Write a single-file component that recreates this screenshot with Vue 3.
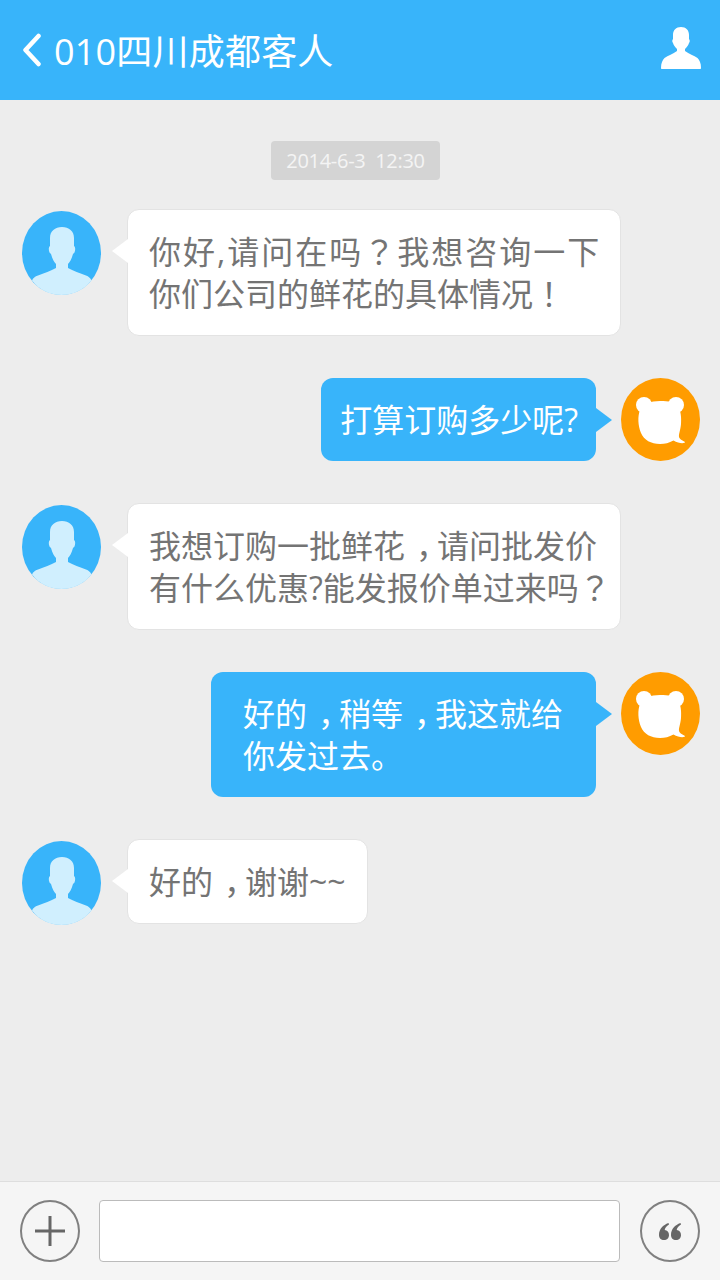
<template>
  <div class="chat-page">
    <!-- Header -->
    <div class="top-bar">
      <svg class="back-icon" width="20" height="34" viewBox="0 0 20 34">
        <path d="M16.5 3 L3.5 17 L16.5 31" fill="none" stroke="#fff" stroke-width="4.5" stroke-linecap="round" stroke-linejoin="round" />
      </svg>
      <span class="top-title">010四川成都客人</span>
      <svg class="user-icon" width="40" height="42" viewBox="0 0 40 42">
        <path fill="#fff" d="M20 0 C15 0 12 3 12 8 L12 12 C11 13 11 15 12 16 C12.5 18 14 20 16 22 L16 24 C12 27 7 28.5 3.5 31 C1.5 33 0 36 0 41 C0 41.6 .4 42 1 42 L39 42 C39.6 42 40 41.6 40 41 C40 36 38.5 33 36.5 31 C33 28.5 28 27 24 24 L24 22 C26 20 27.5 18 28 16 C29 15 29 13 28 12 L28 8 C28 3 25 0 20 0 Z" />
      </svg>
    </div>

    <!-- Messages -->
    <div class="msg-area">
      <div class="time-tag">{{ sentAt }}</div>
      <div class="msg-list">
        <div v-for="(msg, i) in messages" :key="i" class="msg-row" :class="msg.mine ? 'mine' : 'other'">
          <svg v-if="!msg.mine" class="avatar guest" width="79" height="84" viewBox="0 0 79 84">
            <ellipse cx="39.5" cy="42" rx="39.5" ry="42" fill="#38b4fa" />
            <path fill="#d0effe" d="M40 16 C33 16 28 20 28 27 L28 35 C26.5 36 26.5 39 27.5 41.5 L29 43 C30.5 48 32 51 34 53 L34 57 C29 60 22 62 16 64.5 C13 65.5 11 67 10 69.5 C17 79 28 84 39.5 84 C51 84 62 79 69.5 69.5 C68.5 67 66.5 65.5 64 64.5 C58 62 51 60 46 57 L46 53 C48 51 49.5 48 51 43 L52.5 41.5 C53.5 39 53.5 36 52 35 L52 27 C52 20 47 16 40 16 Z" />
          </svg>
          <div class="bubble" :class="{ roomy: msg.roomy, full: msg.lines.length > 1 && !msg.mine }">
            <span class="tail"></span>
            <div v-for="(line, n) in msg.lines" :key="n" class="line" :class="{ spaced: msg.spaced && n === 0 }">
              <template v-for="(part, p) in splitPunct(line)" :key="p"><span v-if="part === '，'" class="comma">{{ part }}</span><span v-else-if="isPunct(part)" class="punct">{{ part }}</span><template v-else>{{ part }}</template></template>
            </div>
          </div>
          <svg v-if="msg.mine" class="avatar bear" width="79" height="83" viewBox="0 0 79 83">
            <ellipse cx="39.5" cy="41.5" rx="39.5" ry="41.5" fill="#ff9c00" />
            <circle cx="23" cy="27" r="8" fill="#fff" />
            <circle cx="55" cy="27" r="8" fill="#fff" />
            <path fill="#fff" d="M39 23 C48 23 53 24 56.5 28 C60 32 60.5 40 60 46 C59.5 52 57.5 56 58 59 C59 62 62 62.5 64 64 C64.5 65.5 58 66 52.5 62.5 C48 65 44 66 39 66 C30 66 23 62 20 55 C17 48 16.5 38 19 32 C21 26 30 23 39 23 Z" />
          </svg>
        </div>
      </div>
    </div>

    <!-- Input bar -->
    <div class="input-bar">
      <div class="round-btn">
        <svg width="30" height="30" viewBox="0 0 30 30">
          <path d="M15 0 V30 M0 15 H30" stroke="#666" stroke-width="3" fill="none" />
        </svg>
      </div>
      <input class="msg-input" type="text" />
      <div class="round-btn">
        <svg width="22" height="17" viewBox="0 0 22 17">
          <path fill="#666" d="M5 17 C2 17 0 15 0 12 C0 6 4 2 9.5 0 L10 1.5 C7.5 3 6 4.8 5.7 7 C8.2 7.2 10 9.3 10 12 C10 15 8 17 5 17 Z" />
          <path fill="#666" d="M17 17 C14 17 12 15 12 12 C12 6 16 2 21.5 0 L22 1.5 C19.5 3 18 4.8 17.7 7 C20.2 7.2 22 9.3 22 12 C22 15 20 17 17 17 Z" />
        </svg>
      </div>
    </div>
  </div>
</template>

<script setup>
const sentAt = '2014-6-3  12:30'

const messages = [
  { mine: false, spaced: true, lines: ['你好,请问在吗？我想咨询一下', '你们公司的鲜花的具体情况！'] },
  { mine: true, lines: ['打算订购多少呢?'] },
  { mine: false, lines: ['我想订购一批鲜花，请问批发价', '有什么优惠?能发报价单过来吗？'] },
  { mine: true, roomy: true, lines: ['好的，稍等，我这就给', '你发过去。'] },
  { mine: false, lines: ['好的，谢谢~~'] },
]

// fullwidth marks sit centred in the cell, which the TC cut of the font does
function splitPunct (line) {
  return line.split(/([，？！])/).filter(Boolean)
}

function isPunct (part) {
  return /^[？！]$/.test(part)
}
</script>

<style>
html, body {
  margin: 0;
  padding: 0;
}
</style>

<style scoped>
.chat-page {
  height: 100vh;
  display: flex;
  flex-direction: column;
  background: #ededed;
  font-family: "Open Sans", "Noto Sans CJK SC", sans-serif;
}

.top-bar {
  height: 100px;
  flex-shrink: 0;
  display: flex;
  align-items: center;
  padding: 0 19px 0 22px;
  background: #38b4fa;
  box-sizing: border-box;
}

.back-icon { flex-shrink: 0; }

.top-title {
  flex: 1;
  margin-left: 12px;
  margin-top: 4px;
  font-size: 36px;
  letter-spacing: 0.2px;
  line-height: 44px;
  color: #fff;
  white-space: nowrap;
}

.user-icon { flex-shrink: 0; margin-bottom: 4px; }

.msg-area {
  flex: 1;
  display: flex;
  flex-direction: column;
  padding-top: 41px;
}

.time-tag {
  align-self: flex-start;
  margin-left: 271px;
  width: 169px;
  height: 39px;
  line-height: 39px;
  text-align: center;
  font-size: 20px;
  letter-spacing: -0.3px;
  color: #f4f4f4;
  background: #d4d4d4;
  border-radius: 4px;
  white-space: pre;
}

.msg-list {
  margin-top: 29px;
  display: flex;
  flex-direction: column;
  gap: 42px;
}

.msg-row {
  display: flex;
  align-items: flex-start;
}

.msg-row.other { padding-left: 22px; }
.msg-row.mine { justify-content: flex-end; padding-right: 20px; }

.avatar { flex-shrink: 0; }
.other .avatar { margin-top: 2px; margin-right: 26px; }
.mine .avatar { margin-left: 25px; }

.bubble {
  position: relative;
  font-size: 32px;
  line-height: 42px;
  border-radius: 12px;
  white-space: pre;
}

.other .bubble {
  padding: 21px 21px 20px;
  background: #fff;
  border: 1px solid #e3e3e3;
  color: #747474;
}

.other .bubble.full {
  width: 494px;
  box-sizing: border-box;
}

.mine .bubble {
  padding: 21px 18px 20px 19px;
  background: #38b4fa;
  color: #fff;
}

.mine .bubble.roomy {
  padding-left: 32px;
  padding-right: 33px;
}

.line { height: 42px; }
.line.spaced { letter-spacing: 2px; }

.punct {
  font-family: "Noto Sans CJK TC", sans-serif;
  line-height: 0;
}

/* same 32px cell, the mark pushed to its middle */
.comma {
  padding-left: 11px;
  letter-spacing: -11px;
}

.tail {
  position: absolute;
  top: 29px;
  width: 0;
  height: 0;
  border-top: 12px solid transparent;
  border-bottom: 12px solid transparent;
}

.other .tail {
  left: -16px;
  border-right: 16px solid #fff;
}

.mine .tail {
  right: -16px;
  top: 30px;
  border-left: 16px solid #38b4fa;
}

.input-bar {
  height: 99px;
  flex-shrink: 0;
  display: flex;
  align-items: center;
  gap: 20px;
  padding: 0 20px;
  box-sizing: border-box;
  background: #f5f5f5;
  border-top: 1px solid #dedede;
}

.round-btn {
  width: 60px;
  height: 62px;
  flex-shrink: 0;
  display: flex;
  align-items: center;
  justify-content: center;
  border: 2px solid #808080;
  border-radius: 50%;
  box-sizing: border-box;
}

.msg-input {
  flex: 1;
  min-width: 0;
  height: 62px;
  margin: 0 0 0 -1px;
  padding: 0 10px;
  background: #fff;
  border: 1px solid #bbb;
  border-radius: 4px;
  box-sizing: border-box;
  outline: none;
}
</style>
